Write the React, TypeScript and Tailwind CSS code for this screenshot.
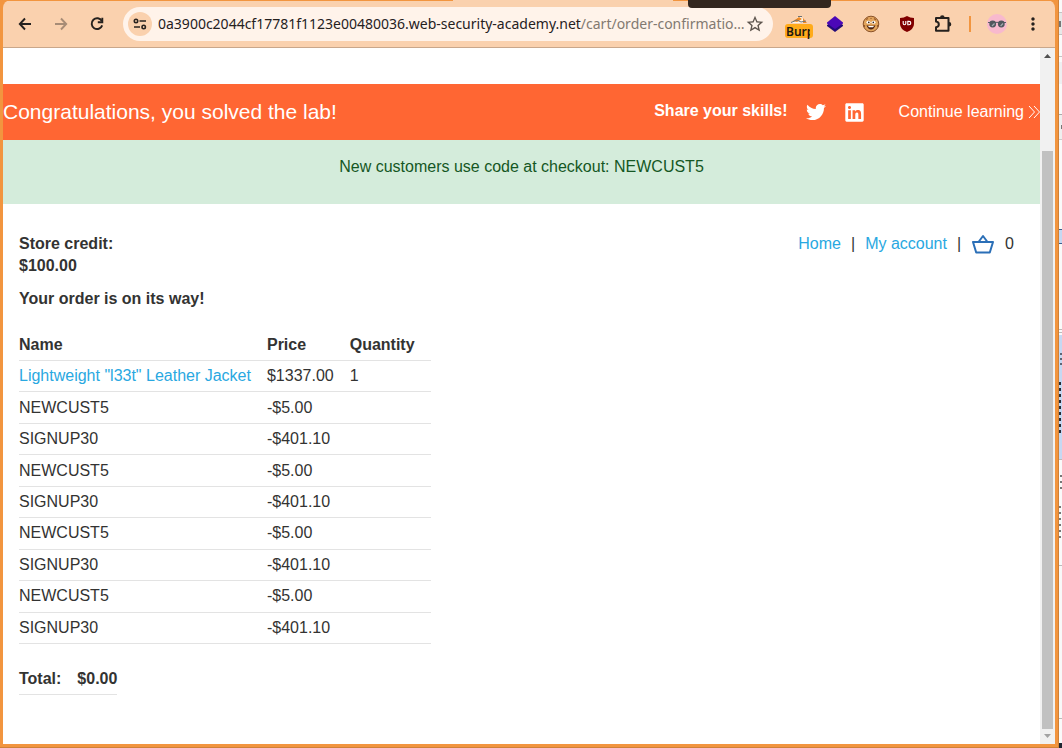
import type { ReactNode } from "react";
import { FaLinkedin, FaTwitter } from "react-icons/fa";
import { MdMoreVert, MdStarBorder } from "react-icons/md";

const items = [
  { name: 'Lightweight "l33t" Leather Jacket', price: "$1337.00", quantity: "1", link: true },
  { name: "NEWCUST5", price: "-$5.00" },
  { name: "SIGNUP30", price: "-$401.10" },
  { name: "NEWCUST5", price: "-$5.00" },
  { name: "SIGNUP30", price: "-$401.10" },
  { name: "NEWCUST5", price: "-$5.00" },
  { name: "SIGNUP30", price: "-$401.10" },
  { name: "NEWCUST5", price: "-$5.00" },
  { name: "SIGNUP30", price: "-$401.10" },
];

function ToolButton({ label, children }: { label: string; children: ReactNode }) {
  return (
    <button type="button" aria-label={label} className="flex h-9 w-9 shrink-0 items-center justify-center">
      {children}
    </button>
  );
}

function BackArrow() {
  return (
    <svg width="16" height="16" viewBox="0 0 16 16" fill="none" stroke="#25211e" strokeWidth="1.9">
      <path d="M14 8H3.5M8 2.5L2.8 8L8 13.5" />
    </svg>
  );
}

function ForwardArrow() {
  return (
    <svg width="16" height="16" viewBox="0 0 16 16" fill="none" stroke="#a78c76" strokeWidth="1.9">
      <path d="M2 8H12.5M8 2.5L13.2 8L8 13.5" />
    </svg>
  );
}

function Reload() {
  return (
    <svg width="16" height="16" viewBox="0 0 16 16" fill="none" stroke="#25211e" strokeWidth="1.9">
      <path d="M12.8 5A5.4 5.4 0 1 0 13.2 9.4" />
      <path d="M13.3 1.8V6.2H8.8" />
    </svg>
  );
}

function SiteSettings() {
  return (
    <svg width="14" height="12" viewBox="0 0 14 12" fill="none" stroke="#29231f" strokeWidth="1.6">
      <circle cx="3" cy="3" r="1.7" />
      <path d="M6.5 3H13M1 9H7" />
      <circle cx="10.7" cy="9" r="1.7" />
    </svg>
  );
}

function Burp() {
  return (
    <svg width="28" height="30" viewBox="0 0 28 30">
      <path d="M6 14L13 8H16L22 14Z" fill="#fff5e6" />
      <path d="M8 12L14 8L17 10L12 13ZM18 9L22 14H18Z" fill="#f08a24" />
      <path d="M13 7.5H17M6 13.5L12 11L16 13L21 12" stroke="#6d7376" strokeWidth="1" fill="none" />
      <rect y="15" width="28" height="14" rx="3" fill="#ffab1a" />
      <svg x="1" y="14" width="24" height="16">
        <text x="0" y="13" fontSize="12" fontWeight="600" fontFamily="'Noto Sans', sans-serif" fill="#1c1710">
          Burp
        </text>
      </svg>
    </svg>
  );
}

function Layers() {
  return (
    <svg width="18" height="18" viewBox="0 0 18 18">
      <path d="M1 10L9 5L17 10V11L9 17L1 11Z" fill="#230b78" />
      <path d="M9 1L17 7.5V8.5L9 14L1 8.5V7.5Z" fill="#4b08b7" />
    </svg>
  );
}

function Cookie() {
  return (
    <svg width="18" height="18" viewBox="0 0 18 18">
      <circle cx="9" cy="9" r="7.8" fill="#e2a45b" stroke="#8a5228" strokeWidth="1" />
      <path d="M4 4.5L6 3.5M12 3.5L14 5M9 3V4M2.5 10V12M15.5 10V12" stroke="#9a5d2c" strokeWidth="1.2" />
      <ellipse cx="6.5" cy="7.3" rx="2" ry="1.5" fill="#fff" />
      <ellipse cx="11.5" cy="7.3" rx="2" ry="1.5" fill="#fff" />
      <circle cx="6.8" cy="7.4" r=".8" fill="#2f1b11" />
      <circle cx="11.3" cy="7.4" r=".8" fill="#2f1b11" />
      <path d="M4.5 10.3Q9 11.3 13.5 10.3Q12 14.5 9 14.5Q6 14.5 4.5 10.3Z" fill="#4d2312" />
      <path d="M6 10.9H12L11 12.3H7Z" fill="#fff" />
    </svg>
  );
}

function Shield() {
  return (
    <svg width="16" height="16" viewBox="0 0 16 16">
      <path d="M8 0Q11 2 15 2V8Q15 13 8 16Q1 13 1 8V2Q5 2 8 0Z" fill="#800000" />
      <path d="M4.2 5V7.6Q4.2 8.8 5.4 8.8Q6.8 8.8 6.8 7.6V5" fill="none" stroke="#fff" strokeWidth="1.1" />
      <path d="M8.8 5.4H10Q11.8 5.4 11.8 7.1T10 8.8H8.8Z" fill="none" stroke="#fff" strokeWidth="1.1" />
    </svg>
  );
}

function Puzzle() {
  return (
    <svg width="20" height="20" viewBox="0 0 20 20" fill="none">
      <path
        d="M3 4H15.5V16.8H3V13.2Q5.8 12.8 5.8 10.4T3 7.6Z"
        stroke="#25211e"
        strokeWidth="2"
        strokeLinejoin="round"
      />
      <path d="M7 3.5A2.3 2.3 0 0 1 11.6 3.5ZM16 8A2.3 2.3 0 0 1 16 12.6Z" fill="#25211e" />
    </svg>
  );
}

function Avatar() {
  return (
    <svg width="20" height="20" viewBox="0 0 20 20">
      <circle cx="10" cy="10" r="10" fill="#f8b9ce" />
      <path d="M1 8.5H3M8 9Q10 7.5 12 9M17 8.5H19" stroke="#596069" strokeWidth="1.2" fill="none" />
      <circle cx="5.7" cy="10" r="3.4" fill="#50575e" />
      <circle cx="14.3" cy="10" r="3.4" fill="#50575e" />
      <path d="M5 12L7.5 9.5M13.6 12L16 9.5" stroke="#a3aab0" strokeWidth="1.2" />
    </svg>
  );
}

function Basket() {
  return (
    <svg width="22" height="20" viewBox="0 0 22 20" fill="none" stroke="#2b6fb7" strokeWidth="2" strokeLinejoin="round">
      <path d="M1 8H21L17.8 18.5H4.2Z" />
      <path d="M6.5 8L11 2L15.5 8" />
    </svg>
  );
}

function Toolbar() {
  return (
    <header className="relative flex h-12 shrink-0 items-center rounded-t-lg border-b border-[#c9a78b] bg-[#fad1ae] pr-1 pl-1 text-[#25211e]">
      <span className="absolute top-0 left-0 h-px w-[450px] bg-[#f2953f]" />
      <span className="absolute top-0 right-0 left-[670px] h-px bg-[#f2953f]" />
      <span className="absolute top-0 left-[685px] h-2 w-[143px] rounded-b bg-[#33271f]" />
      <ToolButton label="Back"><BackArrow /></ToolButton>
      <ToolButton label="Forward"><ForwardArrow /></ToolButton>
      <ToolButton label="Reload"><Reload /></ToolButton>
      <div className="ml-2 flex h-[34px] min-w-0 flex-1 items-center rounded-full bg-[#fff3ea] pr-2 pl-[5px]">
        <button type="button" aria-label="View site information" className="flex h-6 w-6 shrink-0 items-center justify-center rounded-full bg-[#fad1ae]">
          <SiteSettings />
        </button>
        <p className="ml-1.5 min-w-0 flex-1 whitespace-nowrap font-['Noto_Sans',sans-serif] text-sm leading-5">
          0a3900c2044cf17781f1123e00480036.web-security-academy.net<span className="text-[#827971]">/cart/order-confirmatio…</span>
        </p>
        <button type="button" aria-label="Bookmark this page" className="shrink-0 text-[#5e554e]"><MdStarBorder size={20} /></button>
      </div>
      <div className="ml-2 flex shrink-0 items-center">
        <ToolButton label="Burp Suite"><Burp /></ToolButton>
        <ToolButton label="Layers"><Layers /></ToolButton>
        <ToolButton label="Cookie editor"><Cookie /></ToolButton>
        <ToolButton label="Content blocker"><Shield /></ToolButton>
        <ToolButton label="Extensions"><Puzzle /></ToolButton>
        <span className="mx-2 h-4 w-0.5 bg-[#f2953f]" />
        <ToolButton label="Profile"><Avatar /></ToolButton>
        <ToolButton label="Menu"><MdMoreVert size={20} /></ToolButton>
      </div>
    </header>
  );
}

function Scrollbar() {
  return (
    <div className="flex w-[15px] shrink-0 flex-col items-center bg-[#f1f1f1]">
      <svg width="15" height="15" viewBox="0 0 15 15"><path d="M4 10L7.5 6L11 10Z" fill="#505050" /></svg>
      <div className="mt-[88px] w-[11px] flex-1 bg-[#c1c1c1]" />
      <svg width="15" height="15" viewBox="0 0 15 15"><path d="M4 5L7.5 9L11 5Z" fill="#a3a3a3" /></svg>
    </div>
  );
}

function BackgroundWindow() {
  return (
    <div className="flex w-[3px] shrink-0 flex-col overflow-hidden bg-[#fafafa]">
      <div className="h-[13px] border-b border-[#c4c4c4]" />
      <div className="flex h-[22px] items-center border-b border-[#c4c4c4] bg-[#e8e8e8]"><span className="h-1.5 w-0.5 bg-[#777]" /></div>
      <div className="h-[22px] border-b border-[#c4c4c4]" />
      <div className="mt-[5px] h-[22px] bg-[#efeff1]" />
      <div className="h-[31px] border-b border-[#aaa]" />
      <div className="flex h-[25px] items-center border-b border-[#ccc] bg-[#efefef]"><span className="ml-0.5 h-1 w-px bg-[#777]" /></div>
      <div className="mt-[89px] h-[15px] border-y border-[#3b5f8f] bg-[#c6d8f2]" />
      <div className="mt-[85px] h-1 border-y border-[#bbb]" />
      <div className="mt-[2px] h-[125px] border-b border-[#bbb] bg-[#c6d8f2]">
        <svg width="3" height="124" viewBox="0 0 3 124">
          <path d="M2 18V30" stroke="#5d6675" strokeWidth="2" strokeDasharray="2 3" />
          <path d="M1 47V100" stroke="#252c38" strokeWidth="2" strokeDasharray="3 3" />
        </svg>
      </div>
      <div className="h-[106px] border-b border-[#bbb]">
        <svg width="3" height="90" viewBox="0 0 3 90">
          <path d="M2 15V30M1 46V80" stroke="#777" strokeWidth="2" strokeDasharray="2 4" />
        </svg>
      </div>
      <div className="h-[153px] border-b border-[#bbb] bg-[#f8f8f8]" />
      <div className="flex-1" />
      <div className="h-[5px] bg-[#202631]" />
    </div>
  );
}

export default function App() {
  return (
    <div className="flex min-h-screen bg-[#f2953f] font-['Liberation_Sans',Arial,sans-serif] text-base leading-[22px] text-[#333332]">
      <div className="flex min-w-0 flex-1 flex-col border-r border-b border-[#cf8138] pr-[3px] pb-[3px] pl-[3px]">
        <Toolbar />
        <div className="flex flex-1 bg-white">
          <main className="min-w-0 flex-1 pt-9">
            <section className="flex h-14 items-center bg-[#ff6633] text-white">
              <h1 className="flex-1 text-[21px] leading-7">Congratulations, you solved the lab!</h1>
              <span className="-mt-0.5 font-bold">Share your skills!</span>
              <a href="#twitter" aria-label="Share on Twitter" className="ml-[18px]"><FaTwitter size={20} /></a>
              <a href="#linkedin" aria-label="Share on LinkedIn" className="ml-[18px]"><FaLinkedin size={21} /></a>
              <a href="#learning" className="ml-[34px] flex items-center whitespace-nowrap">
                Continue learning
                <svg className="ml-1" width="12" height="14" viewBox="0 0 12 14" fill="none" stroke="#fff" strokeWidth="1">
                  <path d="M1 1L6.5 7L1 13M6 1L11.5 7L6 13" />
                </svg>
              </a>
            </section>
            <p className="h-16 bg-[#d4ecdb] pt-4 text-center text-[#155724]">New customers use code at checkout: NEWCUST5</p>
            <div className="px-4 pt-[29px]">
              <div className="flex items-start justify-between">
                <p className="font-bold">Store credit:<br />$100.00</p>
                <nav className="mr-[10px] flex items-center">
                  <a href="#home" className="text-[#29a8e1]">Home</a>
                  <span className="mx-[10px]">|</span>
                  <a href="#account" className="text-[#29a8e1]">My account</a>
                  <span className="mr-[11px] ml-[10px]">|</span>
                  <a href="#cart" aria-label="Cart"><Basket /></a>
                  <span className="ml-[11px]">0</span>
                </nav>
              </div>
              <h2 className="mt-[11px] font-bold">Your order is on its way!</h2>
              <table className="mt-5 h-[314px] border-collapse text-left">
                <thead>
                  <tr className="border-b border-[#e3e3e3]">
                    <th className="py-1 pr-4">Name</th>
                    <th className="py-1 pr-4">Price</th>
                    <th className="py-1 pr-4">Quantity</th>
                  </tr>
                </thead>
                <tbody>
                  {items.map((item, i) => (
                    <tr key={i} className="border-b border-[#e3e3e3]">
                      <td className="py-1 pr-4">
                        {item.link ? <a href="#product" className="text-[#29a8e1]">{item.name}</a> : item.name}
                      </td>
                      <td className="py-1 pr-4">{item.price}</td>
                      <td className="py-1 pr-4">{item.quantity}</td>
                    </tr>
                  ))}
                </tbody>
              </table>
              <table className="mt-5 border-collapse text-left">
                <tbody>
                  <tr className="border-b border-[#e3e3e3]">
                    <th className="py-1 pr-4">Total:</th>
                    <td className="py-1 font-bold">$0.00</td>
                  </tr>
                </tbody>
              </table>
            </div>
          </main>
          <Scrollbar />
        </div>
      </div>
      <BackgroundWindow />
    </div>
  );
}
